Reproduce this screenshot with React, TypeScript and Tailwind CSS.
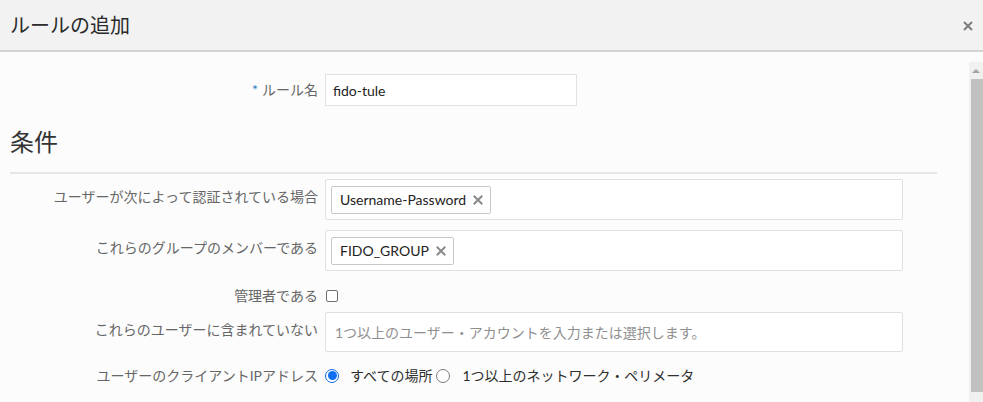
import React from 'react'

const font = { fontFamily: 'Lato, "Noto Sans CJK JP", sans-serif' }

function Tag({ text }: { text: string }) {
  return (
    <span className="inline-flex items-center gap-[7px] h-[28px] pl-[8px] pr-[7px] border border-[#c8c8c8] rounded-[2px] bg-white text-[14px] text-[#222]">
      {text}
      <svg width="10" height="10" viewBox="0 0 10 10" className="mt-[1px]">
        <path d="M1.5 1.5 L8.5 8.5 M8.5 1.5 L1.5 8.5" stroke="#8a8a8a" strokeWidth="2" strokeLinecap="square" />
      </svg>
    </span>
  )
}

function Row({ label, children, center }: { label: React.ReactNode; children: React.ReactNode; center?: boolean }) {
  return (
    <div className={`flex ${center ? 'items-center' : 'items-start'} gap-[7px]`}>
      <div className={`w-[318px] shrink-0 text-right text-[14px] leading-[20px] text-[#666] ${center ? '' : 'pt-[8px]'}`}>{label}</div>
      <div className="flex-1 min-w-0">{children}</div>
    </div>
  )
}

function Radio({ checked }: { checked?: boolean }) {
  return checked ? (
    <span className="shrink-0 w-[14px] h-[14px] rounded-full border border-[#0b6ce0] bg-white flex items-center justify-center">
      <span className="w-[9px] h-[9px] rounded-full bg-[#0f6ff0]" />
    </span>
  ) : (
    <span className="shrink-0 block w-[14px] h-[14px] rounded-full border border-[#7a7a7a] bg-white" />
  )
}

export default function App() {
  return (
    <div className="w-[983px] h-[402px] overflow-hidden bg-[#fcfcfc] relative" style={font}>
      {/* Header */}
      <div className="h-[52px] bg-[#f2f2f2] border-b-2 border-[#d4d4d4] flex items-center justify-between pl-[10px] pr-[10px]">
        <span className="text-[20px] text-[#2b2b2b]">ルールの追加</span>
        <svg width="10" height="10" viewBox="0 0 10 10" className="mt-[1px]">
          <path d="M1 1 L9 9 M9 1 L1 9" stroke="#7d7d7d" strokeWidth="2" />
        </svg>
      </div>

      {/* Scrollbar */}
      <div className="absolute right-0 top-[62px] bottom-0 w-[14px] bg-[#f0f0f0] flex flex-col items-end">
        <div className="h-[17px] w-full flex items-center justify-center">
          <svg width="8" height="5" viewBox="0 0 8 5">
            <path d="M0 5 L4 1 L8 5 Z" fill="#a3a3a3" />
          </svg>
        </div>
        <div className="w-[12px] h-[313px] bg-[#c1c1c1]" />
      </div>

      {/* Body */}
      <div className="pt-[22px] pr-[46px]">
        <Row label={<><span className="text-[#2a7ac0] mr-[4px]">*</span>ルール名</>} center>
          <div className="w-[252px] h-[32px] border border-[#e2e2e2] bg-white flex items-center px-[7px] text-[14px] text-[#222]">
            fido-tule
          </div>
        </Row>

        <div className="pl-[10px] mt-[20px] text-[24px] text-[#333] leading-[32px]">条件</div>
        <div className="ml-[10px] mt-[14px] border-t-2 border-[#e6e6e6]" />

        <div className="mt-[5px] flex flex-col pr-[34px]">
          <Row label="ユーザーが次によって認証されている場合">
            <div className="h-[41px] border border-[#e0e0e0] rounded-[2px] bg-white flex items-center px-[5px]">
              <Tag text="Username-Password" />
            </div>
          </Row>
          <div className="mt-[10px]">
            <Row label="これらのグループのメンバーである">
              <div className="h-[41px] border border-[#e0e0e0] rounded-[2px] bg-white flex items-center px-[5px]">
                <Tag text="FIDO_GROUP" />
              </div>
            </Row>
          </div>
          <div className="mt-[15px] mb-[6px]">
            <Row label="管理者である" center>
              <span className="block w-[12px] h-[12px] border border-[#6e6e6e] rounded-[2px] bg-white ml-[1px]" />
            </Row>
          </div>
          <Row label="これらのユーザーに含まれていない">
            <div className="h-[40px] border border-[#e0e0e0] rounded-[2px] bg-white flex items-center px-[9px] text-[14px] text-[#8f8f8f]">
              1つ以上のユーザー・アカウントを入力または選択します。
            </div>
          </Row>
          <div className="mt-[13px]">
            <Row label="ユーザーのクライアントIPアドレス" center>
              <div className="flex items-center text-[14px] text-[#2e2e2e]">
                <Radio checked />
                <span className="ml-[11px]">すべての場所</span>
                <span className="ml-[4px]"><Radio /></span>
                <span className="ml-[12px]">1つ以上のネットワーク・ペリメータ</span>
              </div>
            </Row>
          </div>
        </div>
      </div>
    </div>
  )
}
